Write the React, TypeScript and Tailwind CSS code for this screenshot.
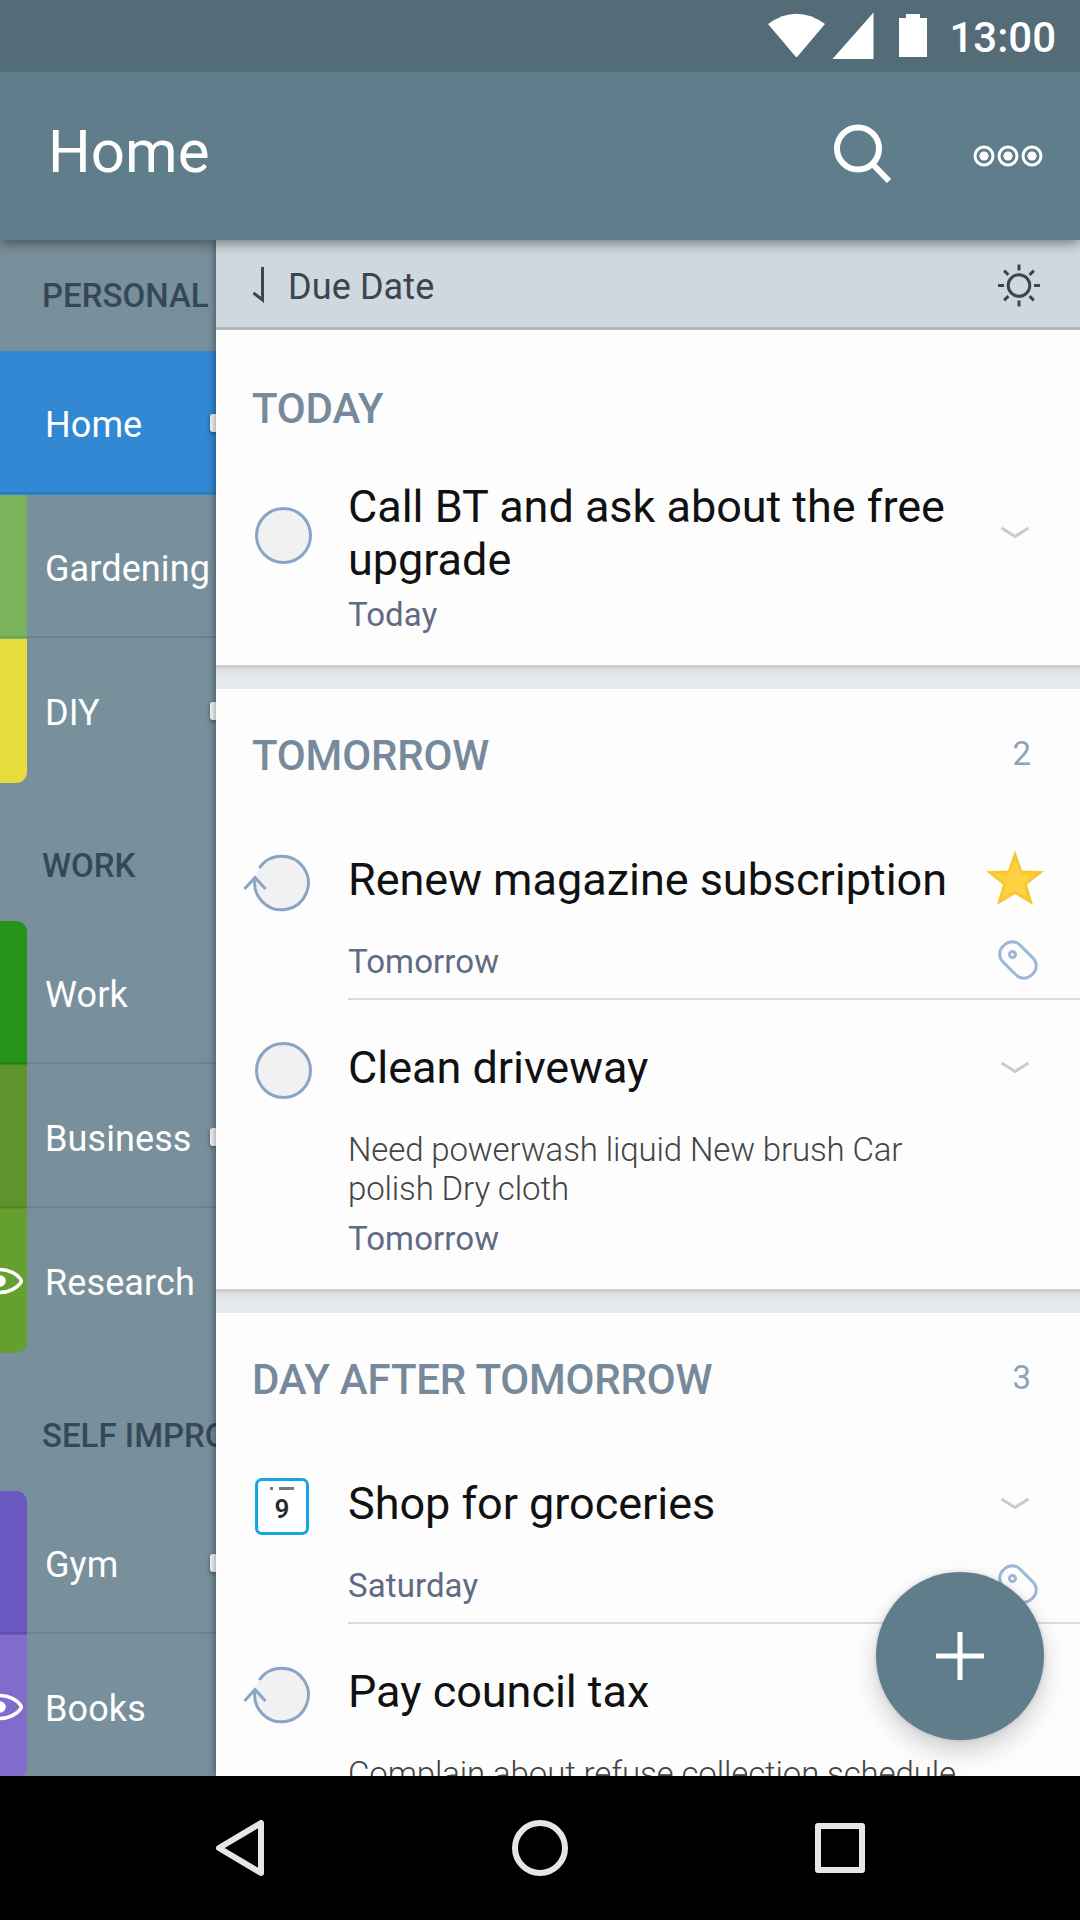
import type { ReactNode } from "react";

type SideItem = { label: string; color: string; active?: boolean; badge?: boolean; eye?: boolean; shape?: string };
type SideGroup = { title: string; first?: boolean; items: SideItem[] };

const groups: SideGroup[] = [
  {
    title: "PERSONAL",
    first: true,
    items: [
      { label: "Home", color: "bg-[#3288d3]", active: true, badge: true },
      { label: "Gardening", color: "bg-[#79b45d]" },
      { label: "DIY", color: "bg-[#e8db3c]", badge: true, shape: "rounded-br-[11px]" },
    ],
  },
  {
    title: "WORK",
    items: [
      { label: "Work", color: "bg-[#259419]", shape: "rounded-tr-[11px]" },
      { label: "Business", color: "bg-[#5f932b]", badge: true },
      { label: "Research", color: "bg-[#659f2e]", eye: true, shape: "rounded-br-[11px]" },
    ],
  },
  {
    title: "SELF IMPROVEMENT",
    items: [
      { label: "Gym", color: "bg-[#6b57c2]", badge: true, shape: "rounded-tr-[11px]" },
      { label: "Books", color: "bg-[#806dcb]", eye: true, shape: "rounded-br-[11px]" },
    ],
  },
];

function StatusBar() {
  return (
    <div className="relative z-30 flex h-[72px] shrink-0 justify-end bg-[#536c77] pr-[24px] text-white">
      <svg className="h-[72px] w-[184px]" viewBox="764 0 184 72" fill="currentColor">
        <path d="M768 24 Q796.500 3.500 825 24 L797.500 56.500 Q796.500 57.500 795.500 56.500 Z" />
        <path d="M832.500 59 L873.500 12.500 V59 Z" />
        <path d="M906 14 h14 v4 h7 v39 h-28 v-39 h7 Z" />
      </svg>
      <span className="w-[108px] text-right text-[42px] leading-[76px] font-medium">13:00</span>
    </div>
  );
}

function ActionBar() {
  return (
    <header className="relative z-20 flex h-[168px] shrink-0 items-center justify-between bg-[#607d8b] pl-[48px] text-white shadow-[0_3px_12px_rgba(0,0,0,0.45)]">
      <h1 className="pb-[8px] text-[60px] leading-[70px]">Home</h1>
      <svg className="h-[168px] w-[260px]" viewBox="820 72 260 168" fill="none" stroke="currentColor">
        <circle cx="858" cy="148.500" r="21" strokeWidth="6" />
        <path d="M872 163.500 L889 181" strokeWidth="6" />
        {[984, 1008, 1032].map((x) => (
          <g key={x}>
            <circle cx={x} cy="156" r="9" strokeWidth="3" />
            <circle cx={x} cy="156" r="4.600" fill="currentColor" stroke="none" />
          </g>
        ))}
      </svg>
    </header>
  );
}

function Eye() {
  return (
    <svg className="h-[30px] w-[27px]" viewBox="0 -15 27 30" fill="none" stroke="white" strokeWidth="3.600">
      <path d="M-21.500 0 C-14 -8 -7 -11.500 0 -11.500 C9 -11.500 17 -7 20.500 -2 Q22 0 20.500 2 C17 7 9 11.500 0 11.500 C-7 11.500 -14 8 -21.500 0 Z" />
      <circle cx="0" cy="0" r="5.800" fill="white" stroke="none" />
    </svg>
  );
}

function SideRow({ item, last }: { item: SideItem; last: boolean }) {
  return (
    <li className={`relative flex h-[144px] ${item.active ? "bg-[#3288d3]" : ""}`}>
      <div className={`flex w-[27px] shrink-0 items-center ${item.color} ${item.shape ?? ""}`}>{item.eye && <Eye />}</div>
      <div className="flex flex-1 items-center justify-between pl-[18px]">
        <span className="pt-[3px] text-[36px] leading-[42px] tracking-[0.1px] text-white">{item.label}</span>
        {item.badge && <i className="mt-[-1px] h-[18px] w-[6px] shrink-0 rounded-l-[3px] bg-[#f7f7f7] shadow-[0_2px_4px_rgba(0,0,0,0.4)]" />}
      </div>
      {!last && <div className="absolute inset-x-0 bottom-px h-[2px] bg-black/10" />}
    </li>
  );
}

function Sidebar() {
  return (
    <nav className="w-[216px] shrink-0 overflow-hidden bg-[#78909c]">
      {groups.map((g) => (
        <section key={g.title}>
          <h2
            className={`flex items-end pb-[36px] pl-[42px] text-[33px] leading-[38px] font-medium whitespace-nowrap text-[#344955] ${g.first ? "h-[111px]" : "h-[138px]"}`}
          >
            {g.title}
          </h2>
          <ul>
            {g.items.map((it, i) => (
              <SideRow key={it.label} item={it} last={i === g.items.length - 1} />
            ))}
          </ul>
        </section>
      ))}
    </nav>
  );
}

function SortBar() {
  return (
    <div className="flex h-[90px] items-center border-b-[3px] border-[#abb7bf] bg-[#cfd7df] pl-[35px] text-[#3c444d]">
      <svg className="mt-[2px] h-[40px] w-[37px]" viewBox="251 265 37 40" fill="none" stroke="currentColor" strokeWidth="3">
        <path d="M262.500 267 V300 L253.500 293" />
      </svg>
      <span className="flex-1 pt-[6px] text-[36px] leading-[42px] tracking-[0.1px]">Due Date</span>
      <svg className="mr-[37px] h-[48px] w-[48px]" viewBox="-24 -25.500 48 48" fill="none" stroke="currentColor" strokeWidth="3">
        <circle r="10.800" />
        {[0, 45, 90, 135, 180, 225, 270, 315].map((a) => (
          <path key={a} d="M0 -15 V-21" transform={`rotate(${a})`} />
        ))}
      </svg>
    </div>
  );
}

function Circle() {
  return (
    <svg className="mt-[2px] h-[64px] w-[132px]" viewBox="216 0 132 64" fill="none" strokeWidth="3" stroke="#89a5c5">
      <circle cx="283.500" cy="31.500" r="27" fill="#f1f1f1" />
    </svg>
  );
}

function Repeat() {
  return (
    <svg className="h-[64px] w-[132px]" viewBox="216 0 132 64" fill="none" strokeWidth="3" stroke="#89a5c5">
      <circle cx="282" cy="32" r="27" fill="#f1f1f1" stroke="none" />
      <path d="M259.300 18 A26.800 26.800 0 1 1 255.200 28" />
      <path d="M244.500 39 L255 27.500 L265.500 39" />
    </svg>
  );
}

function CalendarDay() {
  return (
    <div className="flex h-[64px] w-[132px] items-center pl-[39px]">
      <div className="flex h-[57px] w-[54px] flex-col items-center rounded-[7px] border-[3px] border-[#14a5e3] bg-white pt-[6px]">
        <div className="flex gap-[6px]">
          <i className="h-[3px] w-[3px] bg-[#777]" />
          <i className="h-[3px] w-[15px] bg-[#777]" />
        </div>
        <span className="pt-[4px] text-[26px] leading-[30px] font-semibold text-[#2b2b2b]">9</span>
      </div>
    </div>
  );
}

function Chevron() {
  return (
    <svg className="mt-px mr-px h-[14px] w-[30px]" viewBox="0 0 30 14" fill="none" stroke="#cacaca" strokeWidth="3">
      <path d="M1.500 2 L15 10.500 L28.500 2" />
    </svg>
  );
}

function Star() {
  return (
    <svg className="mt-[-3px] mr-px h-[56px] w-[60px]" viewBox="0 0 60 56">
      <path d="M30 0.500 L37 20.500 L59 21.200 L42 34.500 L48 55 L30 44 L12 55 L18 34.500 L1 21.200 L23 20.500 Z" fill="#f8c62d" />
      <path d="M30 8 L35.300 23.500 L51 24 L38.700 33.500 L43.300 48.500 L30 40.500 L16.700 48.500 L21.300 33.500 L9 24 L24.700 23.500 Z" fill="#fdd242" />
    </svg>
  );
}

function Tag() {
  return (
    <svg className="h-[42px] w-[42px]" viewBox="-21 -21 42 42" fill="none" stroke="#9db7d6" strokeWidth="3">
      <rect x="-20.300" y="-12" width="40.600" height="24" rx="11" transform="rotate(45)" />
      <circle cx="-5.500" cy="-5.500" r="3" />
    </svg>
  );
}

type TaskProps = { icon: ReactNode; title: string; notes?: string; date: string; mark: ReactNode; tagged?: boolean; last?: boolean };

function Task({ icon, title, notes, date, mark, tagged, last }: TaskProps) {
  return (
    <article className="flex">
      <div className="flex h-[140px] w-[132px] shrink-0 items-center">{icon}</div>
      <div className={`flex flex-1 ${last ? "pb-[31px]" : "border-b-2 border-[#dcdcdc] pb-[17px]"}`}>
        <div className="w-[630px]">
          <h3 className="flex h-[130px] items-center pt-[5px] text-[45px] leading-[53px] tracking-[-0.03px] text-[#111]">{title}</h3>
          {notes && <p className="mb-[11px] w-[620px] text-[33px] leading-[39px] font-light tracking-[-0.13px] text-[#444]">{notes}</p>}
          <p className="text-[33px] leading-[39px] tracking-[0.1px] text-[#5f6b83]">{date}</p>
        </div>
        <div className="flex w-[75px] flex-col items-center">
          <div className="flex h-[127px] items-center pt-[8px]">{mark}</div>
          {tagged && <div className="pl-[4px]"><Tag /></div>}
        </div>
      </div>
    </article>
  );
}

function Section({ title, count, children }: { title: string; count?: number; children: ReactNode }) {
  return (
    <section className="border-b-[3px] border-[#cbcfd2] bg-[#fdfdfd]">
      <div className="flex h-[123px] items-start justify-between pr-[49px] pl-[36px]">
        <h2 className="pt-[42px] text-[42px] leading-[50px] font-medium tracking-[-0.18px] text-[#778a9b]">{title}</h2>
        {count && <span className="pt-[45px] text-[33px] leading-[40px] text-[#8fa3b8]">{count}</span>}
      </div>
      {children}
    </section>
  );
}

function Gap() {
  return <div className="h-[21px] bg-linear-to-b from-[#dadee1] via-[#e6eaed] via-50% to-[#e6eaec]" />;
}

function NavBar() {
  return (
    <footer className="relative z-30 flex h-[144px] shrink-0 items-center justify-between bg-black px-[210px] text-[#e6e6e6]">
      <svg className="h-[60px] w-[60px]" viewBox="0 0 60 60" fill="none" stroke="currentColor" strokeWidth="6" strokeLinejoin="round">
        <path d="M9 30 L51 5 V55 Z" />
      </svg>
      <svg className="h-[60px] w-[60px]" viewBox="0 0 60 60" fill="none" stroke="currentColor" strokeWidth="6">
        <circle cx="30" cy="30" r="25" />
      </svg>
      <svg className="h-[60px] w-[60px]" viewBox="0 0 60 60" fill="none" stroke="currentColor" strokeWidth="6" strokeLinejoin="round">
        <rect x="8" y="8" width="44" height="44" />
      </svg>
    </footer>
  );
}

export default function App() {
  return (
    <div className="relative flex h-[1920px] w-[1080px] flex-col overflow-hidden bg-black font-[Roboto,sans-serif]">
      <StatusBar />
      <ActionBar />
      <div className="flex h-[1536px] overflow-hidden">
        <Sidebar />
        <main className="relative z-10 w-[864px] shrink-0 bg-[#fdfdfd] shadow-[0_0_8px_rgba(0,0,0,0.5)]">
          <SortBar />
          <div className="h-[12px]" />
          <Section title="TODAY">
            <Task icon={<Circle />} title="Call BT and ask about the free upgrade" date="Today" mark={<Chevron />} last />
          </Section>
          <Gap />
          <Section title="TOMORROW" count={2}>
            <Task icon={<Repeat />} title="Renew magazine subscription" date="Tomorrow" mark={<Star />} tagged />
            <Task
              icon={<Circle />}
              title="Clean driveway"
              notes="Need powerwash liquid New brush Car polish Dry cloth"
              date="Tomorrow"
              mark={<Chevron />}
              last
            />
          </Section>
          <Gap />
          <Section title="DAY AFTER TOMORROW" count={3}>
            <Task icon={<CalendarDay />} title="Shop for groceries" date="Saturday" mark={<Chevron />} tagged />
            <Task icon={<Repeat />} title="Pay council tax" notes="Complain about refuse collection schedule" date="Saturday" mark={null} last />
          </Section>
        </main>
      </div>
      <button
        aria-label="Add task"
        className="absolute right-[36px] bottom-[180px] z-20 flex h-[168px] w-[168px] items-center justify-center rounded-full bg-[#607d8b] shadow-[0_12px_24px_rgba(0,0,0,0.18),0_0_4px_rgba(0,0,0,0.15)]"
      >
        <svg className="h-[48px] w-[48px]" viewBox="0 0 48 48" stroke="white" strokeWidth="5">
          <path d="M24 0 V48 M0 24 H48" />
        </svg>
      </button>
      <NavBar />
    </div>
  );
}
